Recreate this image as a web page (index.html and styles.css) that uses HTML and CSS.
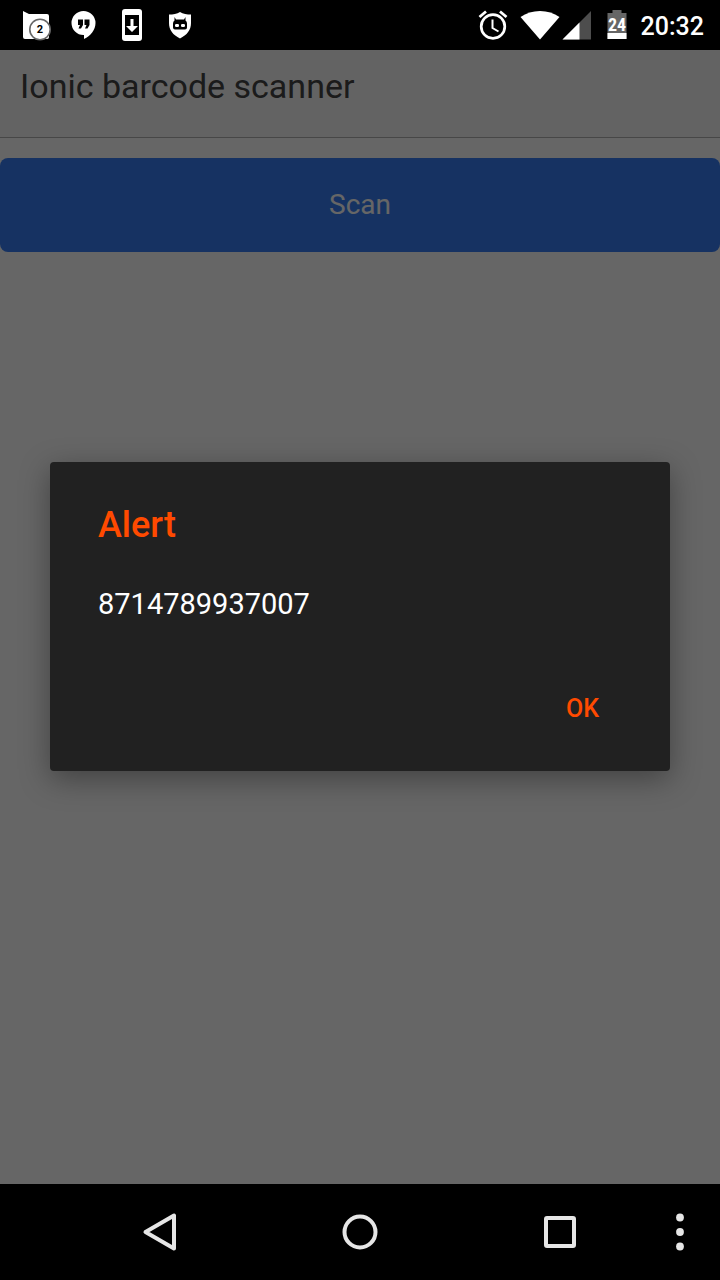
FILE: index.html
```html
<!DOCTYPE html>
<html lang="en">
<head>
<meta charset="utf-8">
<meta name="viewport" content="width=device-width, initial-scale=1">
<title>Ionic barcode scanner</title>
<link rel="stylesheet" href="styles.css">
</head>
<body>
<div class="status-bar">
  <div class="notifications">
    <svg class="notification-icon" viewBox="0 0 48 50" role="img" aria-label="2 messages">
      <path fill="#fff" d="M11 11l6 3h18q2 0 2 2v21q0 2-2 2H13q-2 0-2-2z"/>
      <circle cx="28" cy="29.500" r="10.200" fill="#fff" stroke="#666" stroke-width="1.600"/>
      <text class="badge-count" x="28" y="33" text-anchor="middle">2</text>
    </svg>
    <svg class="notification-icon" viewBox="0 0 48 50" aria-hidden="true">
      <path fill="#fff" d="M23.500 11a12 12 0 0 1 12 12c0 7-5 13-11.500 16v-4h-.5a12 12 0 0 1 0-24z"/>
      <path d="M18 19.500h5v5.500l-2 3.500h-2.500l1.500-3.500h-2zM24.500 19.500h5v5.500l-2 3.500H25l1.500-3.500h-2z"/>
    </svg>
    <svg class="notification-icon" viewBox="0 0 48 50" aria-hidden="true">
      <rect x="14" y="9" width="20" height="32" rx="3" fill="#fff"/>
      <path d="M17 15h14v20H17z"/>
      <path fill="#fff" d="M22.500 19h3v7H30l-6 6-6-6h4.500z"/>
    </svg>
    <svg class="notification-icon" viewBox="0 0 48 50" aria-hidden="true">
      <path fill="#fff" d="M24 12c3 2 7 2.500 11 2.500V23c0 7-4 12-11 15.500C17 35 13 30 13 23v-8.500c4 0 8-.5 11-2.500z"/>
      <path d="M18.500 17l1.500 2.500h8l1.500-2.500v3.500q1.500 1 1.500 3v4q0 2-2 2H19q-2 0-2-2v-4q0-2 1.500-3z"/>
      <rect x="19" y="24" width="4" height="3" rx="1.200" fill="#fff"/>
      <rect x="25" y="24" width="4" height="3" rx="1.200" fill="#fff"/>
    </svg>
  </div>
  <div class="system">
    <svg class="alarm-icon" viewBox="0 0 30 50" aria-hidden="true" fill="none" stroke="#fff">
      <circle cx="15" cy="26.500" r="11.800" stroke-width="2.700"/>
      <path stroke-width="2.800" d="M1.500 17l6.500-5.500M28.500 17L22 11.500"/>
      <path stroke-width="2" d="M14.500 19.500V28l6 3.500"/>
    </svg>
    <svg class="wifi-icon" viewBox="0 0 40 50" aria-hidden="true">
      <path fill="#fff" d="M.5 17Q9 11 20 11t19.500 6L20 39.500z"/>
    </svg>
    <svg class="signal-icon" viewBox="0 0 30 50" aria-hidden="true">
      <path fill="#4d4d4d" d="M29 11v28.500H.5z"/>
      <path fill="#fff" d="M17.500 22.500v17H.5z"/>
    </svg>
    <svg class="battery-icon" viewBox="0 0 20 50" role="img" aria-label="Battery 24 percent">
      <path fill="#666" d="M5.500 10h9v3h5v26H.5V13h5z"/>
      <path fill="#fff" d="M.5 33h19v6H.5z"/>
      <text class="battery-level" x="10" y="31" text-anchor="middle">24</text>
    </svg>
    <time class="clock">20:32</time>
  </div>
</div>

<main class="app">
  <header class="app-header"><h1 class="app-title">Ionic barcode scanner</h1></header>
  <button class="scan-button" type="button">Scan</button>

  <div class="backdrop">
    <div class="dialog" role="alertdialog" aria-modal="true" aria-labelledby="alert-title" aria-describedby="alert-message">
      <h2 class="dialog-title" id="alert-title">Alert</h2>
      <p class="dialog-message" id="alert-message">8714789937007</p>
      <div class="dialog-actions"><button class="dialog-button" type="button">OK</button></div>
    </div>
  </div>
</main>

<nav class="nav-bar" aria-label="System navigation">
  <button class="nav-button" type="button" aria-label="Back">
    <svg class="nav-icon" viewBox="0 0 40 40"><path d="M5.500 20L34 3.500v33z" stroke-linejoin="round"/></svg>
  </button>
  <button class="nav-button" type="button" aria-label="Home">
    <svg class="nav-icon" viewBox="0 0 40 40"><circle cx="20" cy="20" r="15.500"/></svg>
  </button>
  <button class="nav-button" type="button" aria-label="Recent apps">
    <svg class="nav-icon" viewBox="0 0 40 40"><rect x="6" y="6" width="28" height="28" rx="1" stroke-linejoin="round"/></svg>
  </button>
  <button class="nav-button menu-button" type="button" aria-label="Menu">
    <svg class="nav-icon dots" viewBox="0 0 40 40"><circle cx="20" cy="5.500" r="3.900"/><circle cx="20" cy="20" r="3.900"/><circle cx="20" cy="34.500" r="3.900"/></svg>
  </button>
</nav>
</body>
</html>
```
FILE: styles.css
```css
* {
  box-sizing: border-box;
}

body {
  margin: 0;
  min-height: 100vh;
  display: flex;
  flex-direction: column;
  background: #000;
  color: #fff;
  font-family: Roboto, "Noto Sans", sans-serif;
}

button {
  border: 0;
  margin: 0;
  padding: 0;
  background: none;
  font-family: inherit;
}

svg {
  display: block;
}

/* Status bar */
.status-bar {
  display: flex;
  justify-content: space-between;
  height: 50px;
  padding: 0 16px 0 12px;
}

.notifications,
.system {
  display: flex;
  align-items: center;
}

.notification-icon {
  width: 48px;
  height: 50px;
}

.badge-count {
  font-size: 11px;
  font-weight: 700;
}

.alarm-icon,
.signal-icon {
  width: 30px;
  height: 50px;
}

.wifi-icon {
  width: 40px;
  height: 50px;
  margin-left: 12px;
}

.signal-icon {
  margin-left: 2px;
}

.battery-icon {
  width: 20px;
  height: 50px;
  margin: 0 14px 0 15px;
}

.battery-level {
  fill: #fff;
  font-family: "Roboto Condensed", Roboto, sans-serif;
  font-size: 18px;
  font-weight: 700;
}

.clock {
  font-size: 25px;
  font-weight: 500;
  line-height: 50px;
  padding-top: 4px;
}

/* App */
.app {
  position: relative;
  flex: 1;
  background: #fff;
}

.app-header {
  height: 88px;
  padding: 16px 20px;
  background: #f8f8f8;
  border-bottom: 1px solid #b2b2b2;
}

.app-title {
  margin: 0;
  color: #444;
  font-size: 34px;
  font-weight: 400;
  line-height: 40px;
}

.scan-button {
  display: block;
  width: 100%;
  height: 94px;
  margin-top: 20px;
  padding-bottom: 2px;
  border-radius: 8px;
  background: #387ef5;
  color: #fff;
  font-size: 28px;
}

/* Alert dialog */
.backdrop {
  position: absolute;
  inset: 0;
  display: flex;
  align-items: center;
  justify-content: center;
  padding: 0 50px 2px;
  background: rgba(0, 0, 0, 0.6);
}

.dialog {
  width: 100%;
  padding: 40px 48px 29px;
  border-radius: 4px;
  background: #212121;
  box-shadow: 0 8px 30px rgba(0, 0, 0, 0.36);
}

.dialog-title {
  margin: 0;
  color: #ff4a00;
  font-size: 36px;
  font-weight: 500;
  line-height: 46px;
}

.dialog-message {
  margin: 38px 0 53px;
  font-size: 29px;
  line-height: 36px;
}

.dialog-actions {
  display: flex;
  justify-content: flex-end;
}

.dialog-button {
  height: 67px;
  padding: 0 23px;
  color: #ff4a00;
  font-size: 25px;
  font-weight: 500;
}

/* Navigation bar */
.nav-bar {
  display: grid;
  grid-template-columns: repeat(3, 1fr) 60px;
  height: 96px;
  padding-left: 60px;
}

.nav-button {
  display: flex;
  align-items: center;
  justify-content: center;
}

.menu-button {
  padding-right: 20px;
}

.nav-icon {
  width: 40px;
  height: 40px;
  fill: none;
  stroke: #e6e6e6;
  stroke-width: 4;
}

.dots {
  fill: #e6e6e6;
  stroke: none;
}
```
